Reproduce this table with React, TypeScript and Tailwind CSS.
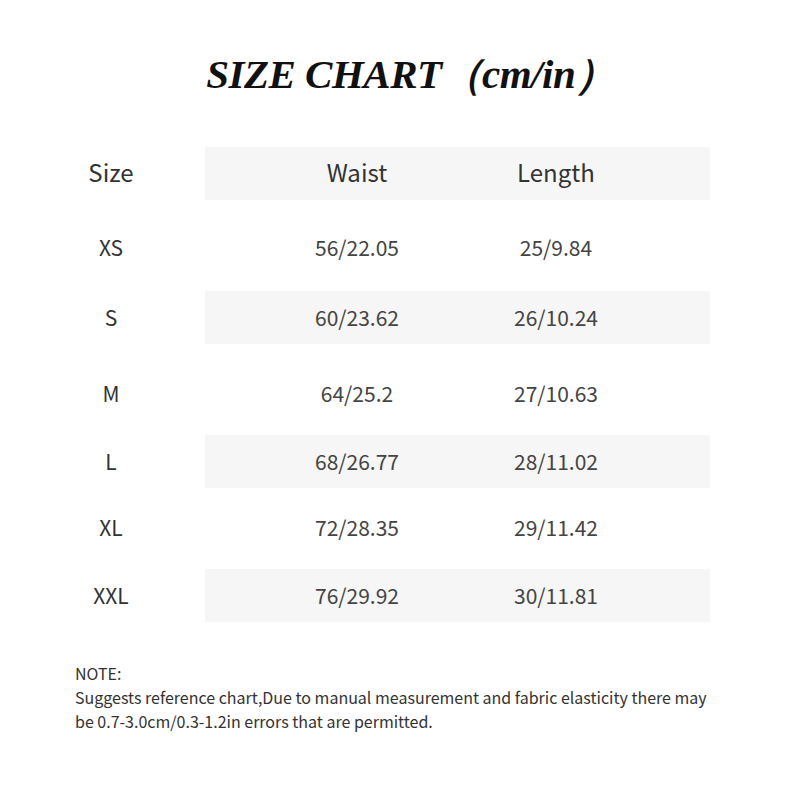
import React from "react";

const rows = [
  { s: "XS", w: "56/22.05", l: "25/9.84", band: false, mt: "mt-[21px]" },
  { s: "S", w: "60/23.62", l: "26/10.24", band: true, mt: "mt-[17px]" },
  { s: "M", w: "64/25.2", l: "27/10.63", band: false, mt: "mt-[23px]" },
  { s: "L", w: "68/26.77", l: "28/11.02", band: true, mt: "mt-[15px]" },
  { s: "XL", w: "72/28.35", l: "29/11.42", band: false, mt: "mt-[13px]" },
  { s: "XXL", w: "76/29.92", l: "30/11.81", band: true, mt: "mt-[15px]" },
];

const sans = { fontFamily: '"Noto Sans CJK SC", "Noto Sans", sans-serif' };

export default function App() {
  return (
    <div className="w-[800px] h-[800px] bg-white text-[#333]" style={sans}>
      <div className="pt-[46px] pl-[22px] flex justify-center">
        <h1
          className="text-[41px] font-bold italic text-[#111] leading-[56px] tracking-[-0.5px]"
          style={{ fontFamily: '"Liberation Serif", "Noto Serif", serif' }}
        >
          SIZE CHART（cm/in）
        </h1>
      </div>
      <div className="mt-[45px] flex flex-col">
        <div className="flex h-[53px] items-center">
          <div className="w-[142px] pl-[80px] pb-[3px] text-center text-[24px]">Size</div>
          <div className="ml-[63px] w-[505px] h-full pb-[3px] bg-[#f6f6f6] flex items-center text-[24px]">
            <div className="w-[304px] text-center">Waist</div>
            <div className="w-[94px] text-center">Length</div>
          </div>
        </div>
        {rows.map((r) => (
          <div key={r.s} className={`flex h-[53px] items-center ${r.mt}`}>
            <div className="w-[142px] pl-[80px] text-center text-[21px]">{r.s}</div>
            <div
              className={`ml-[63px] w-[505px] h-full flex items-center text-[21px] text-[#444] ${
                r.band ? "bg-[#f6f6f6]" : ""
              }`}
            >
              <div className="w-[304px] text-center">{r.w}</div>
              <div className="w-[94px] text-center">{r.l}</div>
            </div>
          </div>
        ))}
      </div>
      <div className="mt-[39px] pl-[75px] pr-[85px] text-[16px] leading-[24px] text-[#333]">
        <div>NOTE:</div>
        <div>
          Suggests reference chart,Due to manual measurement and fabric elasticity there may be
          0.7-3.0cm/0.3-1.2in errors that are permitted.
        </div>
      </div>
    </div>
  );
}
